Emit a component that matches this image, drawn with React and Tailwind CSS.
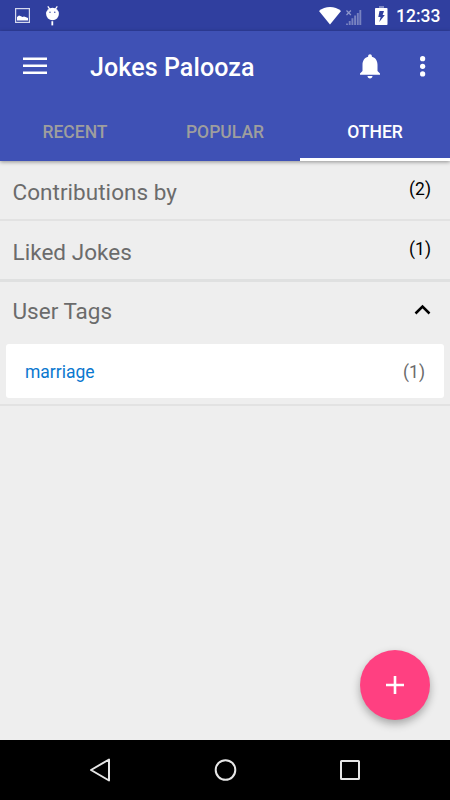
import React, { useState } from 'react';

const tabs = ['RECENT', 'POPULAR', 'OTHER'];

function StatusBar() {
  return (
    <div className="flex h-[31px] items-center justify-between bg-[#303f9f] pr-[9px] pl-[15px]">
      <div className="flex items-center gap-4">
        {/* picture */}
        <svg width="15" height="31" viewBox="0 0 15 31">
          <rect x="0.6" y="8.6" width="13.8" height="13.8" fill="none" stroke="#d5d9ee" strokeWidth="1.2" />
          <path d="M2 20.5V17l2-1.500 2 .8 1.500.7 1.500-.5 1.500.4 2.500 1.100v2.500z" fill="#fff" />
        </svg>
        {/* debug bug */}
        <svg width="14" height="31" viewBox="0 0 14 31">
          <path d="M1.800 6.400l2.300 3.300M11.300 6.400L9 9.700" stroke="#fff" strokeWidth="1.300" />
          <ellipse cx="6.500" cy="14" rx="6.400" ry="6.200" fill="#fff" />
          <path d="M6.300 21.200v4.200" stroke="#fff" strokeWidth="1.800" />
          <circle cx="4" cy="12.200" r="0.7" fill="#303f9f" />
          <circle cx="8.800" cy="12.200" r="0.7" fill="#303f9f" />
        </svg>
      </div>
      <div className="flex items-center">
        <svg width="22" height="31" viewBox="0 0 22 31">
          <path d="M0 11C3 8.300 7 7 11 7s8 1.300 11 4L11 24.500z" fill="#fff" />
        </svg>
        <svg className="ml-[5px]" width="16" height="31" viewBox="0 0 16 31">
          <path d="M.5 10.500l4.400 4.500M4.900 10.500L.5 15" stroke="#8f98cc" strokeWidth="1.2" />
          <path
            d="M1 25v-1.500M3.700 25v-4M6.400 25v-6.700M9.100 25v-9.400M11.800 25V13M14.300 25V10"
            stroke="#7882c0"
            strokeWidth="1.9"
          />
        </svg>
        <svg className="ml-[13px]" width="13" height="31" viewBox="0 0 13 31">
          <path d="M4 6h5v2.200H4z" fill="#7f89c4" />
          <rect x="0" y="8" width="12.500" height="17" rx="0.8" fill="#fff" />
          <path d="M4.500 11h4.500L7.600 15H9.800l-5.500 7 1.300-5H3.300z" fill="#303f9f" />
        </svg>
        <span className="mt-[2px] ml-[8px] w-[45px] text-[17.5px] leading-none font-medium text-white">12:33</span>
      </div>
    </div>
  );
}

function Toolbar() {
  return (
    <div className="flex h-[70px] items-center text-white">
      <svg className="ml-[23px]" width="24" height="18" viewBox="0 0 24 18" fill="currentColor">
        <path d="M0 0.500h24V3H0zM0 7.500h24V10H0zM0 14.500h24V17H0z" />
      </svg>
      <h1 className="ml-[43px] flex-1 pt-[4px] text-[25px] font-medium tracking-[0.1px]">Jokes Palooza</h1>
      <svg width="30" height="30" viewBox="0 0 24 24" fill="currentColor">
        <path d="M12 22c1.100 0 2-.9 2-2h-4c0 1.100.9 2 2 2zm6-6v-5c0-3.070-1.640-5.640-4.500-6.320V4c0-.83-.67-1.500-1.500-1.500s-1.500.67-1.500 1.500v.68C7.630 5.360 6 7.920 6 11v5l-2 2v1h16v-1l-2-2z" />
      </svg>
      <svg className="mr-[12px] ml-[23px]" width="30" height="30" viewBox="0 0 24 24" fill="currentColor">
        <circle cx="11.700" cy="6.100" r="2.100" />
        <circle cx="11.700" cy="12.200" r="2.100" />
        <circle cx="11.700" cy="18.300" r="2.100" />
      </svg>
    </div>
  );
}

function Row({ label, count }) {
  return (
    <div className="flex h-[57px] items-start justify-between pr-[19px] pl-[12.5px]">
      <span className="pt-[16px] text-[22.5px] leading-[30px] tracking-[0.04px] text-[#6b6b6b]">{label}</span>
      <span className="pt-[17px] text-[17.5px] leading-[22px] text-black">{count}</span>
    </div>
  );
}

function App() {
  const [active, setActive] = useState('OTHER');
  const [open, setOpen] = useState(true);

  return (
    <div className="relative flex h-[800px] w-[450px] flex-col overflow-hidden bg-[#eeeeee] font-['Roboto',sans-serif]">
      <StatusBar />

      <header className="z-10 bg-[#3f51b5] shadow-[0_1px_4px_rgba(0,0,0,0.4)]">
        <Toolbar />
        <nav className="flex h-[60px]">
          {tabs.map((tab) => (
            <button
              key={tab}
              onClick={() => setActive(tab)}
              className={`flex-1 border-b-[3px] pt-[5px] text-[17.5px] font-medium ${
                active === tab ? 'border-white text-white' : 'border-transparent text-[#9e9e9e]'
              }`}
            >
              {tab}
            </button>
          ))}
        </nav>
      </header>

      <main className="flex-1">
        <Row label="Contributions by" count="(2)" />
        <div className="mt-px h-[2px] bg-[#e2e2e2]" />
        <Row label="Liked Jokes" count="(1)" />
        <div className="mt-px h-[3px] bg-[#dfe0e0]" />

        <button
          onClick={() => setOpen(!open)}
          className="flex h-[62px] w-full items-start justify-between pt-[14px] pr-[19px] pl-[12.5px]"
        >
          <span className="text-[22.5px] leading-[30px] text-[#6b6b6b]">User Tags</span>
          <svg className="mt-[8px]" width="17" height="11" viewBox="0 0 17 11">
            <path d="M1.500 9.500l7-7 7 7" fill="none" stroke="#000" strokeWidth="2.500" />
          </svg>
        </button>
        {open && (
          <div className="mx-[6px] mb-[6px] flex h-[54px] items-center justify-between rounded-[3px] bg-white pt-[2px] pr-[19px] pl-[19px] text-[17.5px]">
            <span className="text-[#0a78cf]">marriage</span>
            <span className="text-[#6b6b6b]">(1)</span>
          </div>
        )}
        <div className="h-[2px] bg-[#e2e2e2]" />
      </main>

      {/* floating add button */}
      <button className="absolute top-[650px] left-[360px] flex size-[70px] items-center justify-center rounded-full bg-[#ff4081] shadow-[0_4px_8px_rgba(0,0,0,0.3)]">
        <svg width="18" height="18" viewBox="0 0 18 18" stroke="#fff" strokeWidth="2.600">
          <path d="M9 0v18M0 9h18" />
        </svg>
      </button>

      <footer className="flex h-[60px] items-center justify-between bg-black pr-[89px] pl-[88px]">
        <svg width="24" height="26" viewBox="0 0 24 26" fill="none" stroke="#e6e6e6" strokeWidth="2" strokeLinejoin="round">
          <path d="M3 13L21 2.500v21z" />
        </svg>
        <svg width="24" height="24" viewBox="0 0 24 24" fill="none" stroke="#e6e6e6" strokeWidth="2">
          <circle cx="11.500" cy="12" r="9.800" />
        </svg>
        <svg width="22" height="22" viewBox="0 0 22 22" fill="none" stroke="#e6e6e6" strokeWidth="2">
          <rect x="2" y="2" width="18" height="18" rx="0.500" />
        </svg>
      </footer>
    </div>
  );
}

export default App;
